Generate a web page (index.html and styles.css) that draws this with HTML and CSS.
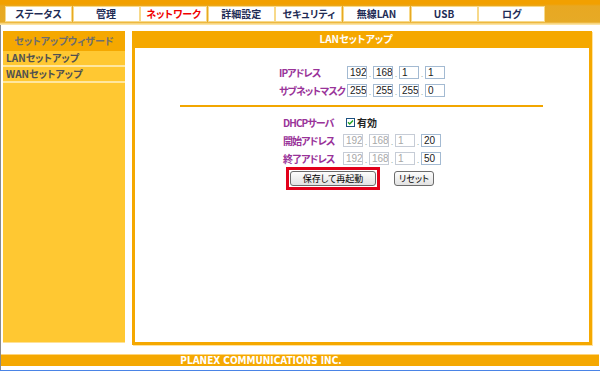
FILE: index.html
```html
<!DOCTYPE html>
<html lang="ja">
<head>
<meta charset="utf-8">
<title>LANセットアップ</title>
<link rel="stylesheet" href="styles.css">
</head>
<body>
<div class="topbar">
  <div class="tab">ステータス</div>
  <div class="tab">管理</div>
  <div class="tab tab-active">ネットワーク</div>
  <div class="tab">詳細設定</div>
  <div class="tab">セキュリティ</div>
  <div class="tab">無線LAN</div>
  <div class="tab">USB</div>
  <div class="tab">ログ</div>
</div>
<div class="lower">
  <div class="content-row">
    <aside class="side">
      <div class="side-head">セットアップウィザード</div>
      <div class="side-item">LANセットアップ</div>
      <div class="side-item">WANセットアップ</div>
    </aside>
    <main class="panel">
      <div class="panel-head">LANセットアップ</div>
      <div class="panel-body">
        <div class="form form-a">
          <div class="label">IPアドレス</div>
          <div class="ipgroup">
            <input class="ip" value="192"><span class="dot">.</span><input class="ip" value="168"><span class="dot">.</span><input class="ip" value="1"><span class="dot">.</span><input class="ip" value="1">
          </div>
          <div class="label">サブネットマスク</div>
          <div class="ipgroup">
            <input class="ip" value="255"><span class="dot">.</span><input class="ip" value="255"><span class="dot">.</span><input class="ip" value="255"><span class="dot">.</span><input class="ip" value="0">
          </div>
        </div>
        <div class="rule"></div>
        <div class="form form-b">
          <div class="label">DHCPサーバ</div>
          <div class="check-cell">
            <svg class="check" width="9" height="9" viewBox="0 0 9 9"><rect x="0.5" y="0.5" width="8" height="8" fill="#fff" stroke="#1c5180"/><path d="M2 4.3 L3.7 6 L7 2.6" fill="none" stroke="#21a121" stroke-width="1.4"/></svg>
            <span class="check-text">有効</span>
          </div>
          <div class="label">開始アドレス</div>
          <div class="ipgroup">
            <input class="ip off" value="192" disabled><span class="dot">.</span><input class="ip off" value="168" disabled><span class="dot">.</span><input class="ip off" value="1" disabled><span class="dot">.</span><input class="ip" value="20">
          </div>
          <div class="label">終了アドレス</div>
          <div class="ipgroup">
            <input class="ip off" value="192" disabled><span class="dot">.</span><input class="ip off" value="168" disabled><span class="dot">.</span><input class="ip off" value="1" disabled><span class="dot">.</span><input class="ip" value="50">
          </div>
        </div>
        <div class="buttons">
          <div class="highlight"><button class="btn btn-save">保存して再起動</button></div>
          <button class="btn btn-reset">リセット</button>
        </div>
      </div>
    </main>
  </div>
  <footer class="foot">PLANEX COMMUNICATIONS INC.</footer>
</div>
<div class="edge"></div>
</body>
</html>
```

FILE: styles.css
```css
html, body {
  margin: 0;
  padding: 0;
  background: #fff;
}
body {
  width: 600px;
  height: 371px;
  overflow: hidden;
  font-family: "Noto Sans CJK JP", "Noto Sans", sans-serif;
  font-feature-settings: "palt" 1;
}
.topbar {
  height: 25px;
  box-sizing: border-box;
  padding: 7px 0 0 6px;
  display: flex;
  gap: 2.6px;
  background: linear-gradient(#f2a000 0, #f2a000 4px, #e8a822 6px, #e6aa26 22px, #f4c65c 23px, #fbe4a4 24px, #fbe4a4 25px);
}
.tab {
  width: 65px;
  height: 14px;
  background: #fff;
  box-shadow: 0 0 0 1px #f7d98a;
  font-size: 10px;
  font-weight: bold;
  line-height: 14px;
  text-align: center;
  color: #1f2c55;
}
.tab-active {
  color: #f00000;
}
.lower {
  height: 345px;
  border-left: 1px solid #8a8a8a;
  box-sizing: border-box;
}
.content-row {
  display: flex;
  gap: 7px;
  padding: 6px 0 0 2px;
}
.side {
  width: 122px;
  height: 312px;
  background: #ffc832;
  border-bottom: 1px solid #ffe196;
  box-sizing: border-box;
}
.side-head {
  height: 20px;
  background: #f5a800;
  color: #6e6e6e;
  font-size: 10px;
  font-weight: bold;
  line-height: 19px;
  text-align: center;
}
.side-item {
  height: 14px;
  line-height: 14px;
  border-bottom: 2px solid #ffe7a0;
  padding-left: 3px;
  color: #505050;
  font-size: 10px;
  font-weight: bold;
}
.panel {
  width: 460px;
  height: 314px;
  box-sizing: border-box;
  border: 3px solid #f5a800;
  border-top: 0;
  box-shadow: 1px 1px 0 #ffe3a0;
  display: flex;
  flex-direction: column;
}
.panel-head {
  height: 17px;
  background: #f5a800;
  color: #fff;
  font-size: 10px;
  font-weight: bold;
  line-height: 16px;
  text-align: center;
  padding-right: 12px;
}
.panel-body {
  flex: 1;
  background: #fff;
  padding-top: 18px;
}
.form {
  display: grid;
  row-gap: 5px;
  align-items: center;
}
.form-a {
  grid-template-columns: 68px auto;
  margin-left: 144px;
}
.form-b {
  grid-template-columns: 60px auto;
  margin-left: 148px;
  margin-top: 9px;
}
.label {
  font-size: 10px;
  font-weight: bold;
  color: #993399;
  line-height: 13px;
  letter-spacing: -0.9px;
  white-space: nowrap;
}
.ipgroup {
  display: flex;
  align-items: flex-end;
  height: 13px;
}
.ip {
  width: 20px;
  height: 13px;
  box-sizing: border-box;
  border: 1px solid #a3bad2;
  padding: 0 0 0 2px;
  margin: 0;
  font-family: "Liberation Sans", Arial, sans-serif;
  font-size: 10px;
  line-height: 11px;
  color: #1a1a1a;
  background: #fff;
  outline: none;
}
.ip.off {
  border-color: #c6ccd6;
  color: #a8a8a8;
}
.dot {
  width: 6px;
  font-family: "Liberation Sans", Arial, sans-serif;
  font-size: 9px;
  line-height: 9px;
  color: #9aa;
  text-align: center;
}
.rule {
  height: 2px;
  background: #f2a600;
  margin: 8px 0 0 45px;
  width: 363px;
}
.check-cell {
  display: flex;
  align-items: center;
  height: 13px;
  padding-left: 3px;
  gap: 2px;
}
.check {
  display: block;
}
.check-text {
  font-size: 10px;
  font-weight: bold;
  color: #222;
  line-height: 13px;
}
.buttons {
  display: flex;
  align-items: center;
  margin: 2px 0 0 151px;
  gap: 14px;
}
.highlight {
  border: 3px solid #e2001a;
  padding: 1px;
  display: flex;
}
.btn {
  height: 15px;
  box-sizing: border-box;
  border: 1px solid #6c6c6c;
  border-radius: 3px;
  background: linear-gradient(#fdfdfd, #e2e2e2);
  font-family: "Noto Sans CJK JP", sans-serif;
  font-feature-settings: "palt" 1;
  font-size: 9px;
  line-height: 12px;
  color: #000;
  padding: 0;
  margin: 0;
}
.btn-save {
  width: 86px;
}
.btn-reset {
  width: 40px;
}
.foot {
  margin: 9px 1px 0 0;
  height: 12px;
  box-sizing: border-box;
  border-top: 1px solid #ffd57c;
  background: #f5a800;
  color: #fff;
  font-family: "Liberation Sans Narrow", "DejaVu Sans Condensed", "Liberation Sans", sans-serif;
  font-size: 10px;
  font-weight: bold;
  line-height: 11px;
  text-align: center;
  padding-right: 78px;
}
.edge {
  height: 1px;
  background: #4a84e6;
}
```
